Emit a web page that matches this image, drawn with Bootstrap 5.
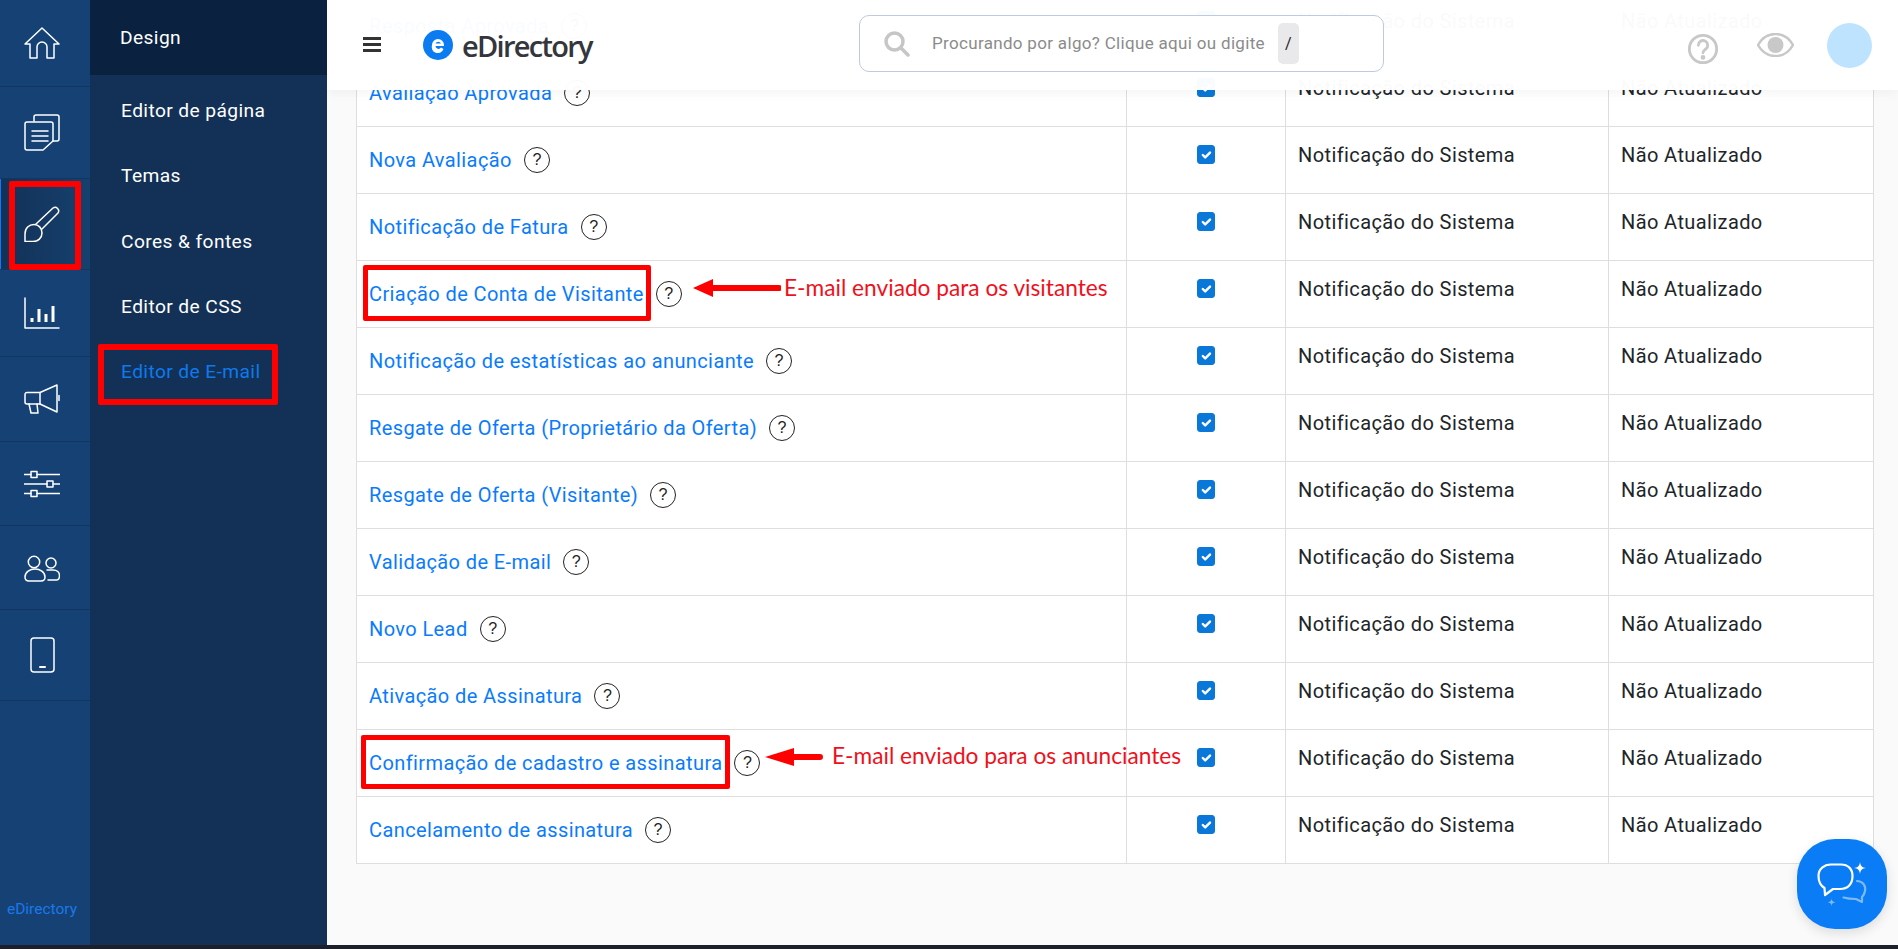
<!DOCTYPE html>
<html lang="pt-BR">

<head>
    <meta charset="UTF-8">
    <meta name="viewport" content="width=device-width, initial-scale=1.0">
    <title>eDirectory - Editor de E-mail</title>
    <link href="https://cdn.jsdelivr.net/npm/bootstrap@5.3.3/dist/css/bootstrap.min.css" rel="stylesheet">
    <style>
        html, body { height: 100%; overflow: hidden; }

        body {
            font-family: Roboto, "Liberation Sans", sans-serif;
            background-color: #1d1f2b;
            color: #212529;
        }

        .app-shell { height: 945px; }

        /* icon rail */
        .rail { width: 90px; background-color: #154175; }
        .rail-item {
            position: relative;
            padding: 27px 6px 27px 0;
            border-bottom: 1px solid #12375f;
            line-height: 0;
            text-align: center;
            color: #fff;
        }
        .rail-item svg { fill: none; stroke: currentColor; stroke-width: 1.5; stroke-linejoin: round; stroke-linecap: round; }
        .rail-item.is-active { background: linear-gradient(90deg, #133156, #15416f); box-shadow: inset 1px 0 0 #0a7bff; }
        .rail-brand { margin-top: auto; padding: 0 6px 24px 0; font-size: 15.5px; color: #1a78ea; text-align: center; }

        /* sub menu */
        .subnav { width: 237px; background-color: #133156; }
        .subnav-title {
            height: 75px;
            padding-left: 30px;
            background-color: #0a2240;
            color: #fff;
            font-size: 19.2px;
            letter-spacing: .4px;
            line-height: 76px;
        }
        .subnav-link {
            display: block;
            position: relative;
            height: 65.25px;
            padding-left: 31px;
            color: #fff;
            font-size: 19.2px;
            letter-spacing: .4px;
            line-height: 65px;
            text-decoration: none;
        }
        .subnav-link.is-current { color: #0f79ec; }
        .subnav-list { padding-top: 3px; }

        /* content */
        .main-area { position: relative; flex: 1; background-color: #fafafa; overflow: hidden; }
        .topbar {
            position: absolute;
            top: 0; left: 0; right: 0;
            height: 90px;
            background-color: rgba(255, 255, 255, .975);
            box-shadow: 0 2px 12px rgba(0, 0, 0, .05);
            z-index: 5;
        }
        .burger { width: 18px; margin-left: 36px; margin-top: -2px; fill: #333; }
        .logo-mark { margin-left: 42px; }
        .logo-word {
            margin-left: 9px;
            font-family: "Open Sans", sans-serif;
            font-size: 29px;
            font-weight: 600;
            letter-spacing: -1.7px;
            color: #33363c;
            line-height: 1;
        }
        .search-box {
            position: absolute;
            left: 532px; top: 15px;
            width: 525px; height: 57px;
            padding-left: 24px;
            border: 1px solid #bccbe0;
            border-radius: 10px;
            background-color: #fff;
        }
        .search-text { margin-left: 22px; font-size: 17px; letter-spacing: .32px; color: #8b8b8b; white-space: nowrap; }
        .slash-key {
            width: 21px; height: 41px;
            margin-left: 13px;
            border-radius: 5px;
            background-color: #e9e9eb;
            color: #222;
            font-size: 16px;
            line-height: 41px;
            text-align: center;
        }
        .top-tools { position: absolute; right: 26px; top: 23px; }
        .tool-eye { margin-left: 38px; margin-top: 10px; }
        .tool-help { margin-top: 10px; }
        .tool-avatar { display: block; width: 45px; height: 45px; margin-left: 33px; border-radius: 50%; background-color: #bde3ff; }

        .mail-table {
            table-layout: fixed;
            width: 1517px;
            margin: -8px 0 0 29px;
            background-color: #fff;
            border-color: #dedede;
            font-size: 20px;
            letter-spacing: .4px;
        }
        .mail-table td { height: 67px; padding: 13px 12px 0; vertical-align: top; color: #212529; border-color: #dedede; }
        .mail-table td.name-cell { padding: 0 12px; vertical-align: middle; }
        .mail-table td.check-cell { padding-top: 18px; text-align: center; }
        .mail-link { color: #0a7bff; text-decoration: none; white-space: nowrap; }
        .help-dot {
            display: inline-block;
            flex: none;
            width: 26px; height: 26px;
            margin-left: 12px;
            border: 1px solid #222;
            border-radius: 50%;
            color: #222;
            font-family: "Liberation Sans", sans-serif;
            font-size: 16px;
            letter-spacing: 0;
            line-height: 24px;
            text-align: center;
        }
        .mail-check.form-check-input {
            width: 18px; height: 19px;
            margin: 0;
            float: none;
            border-radius: 3px;
            background-color: #0a78d8;
            border-color: #0a78d8;
            opacity: 1;
        }

        /* annotations */
        .mark-box { position: absolute; border: 5px solid #ff0000; border-radius: 2px; z-index: 3; }
        .mark-brush { left: 9px; top: 2px; width: 72px; height: 89px; border-width: 6px; }
        .mark-email { left: 8px; top: 5px; width: 180px; height: 61px; border-width: 6px; }
        .mark-visitor { left: 36px; top: 265px; width: 288px; height: 56px; }
        .mark-advertiser { left: 34px; top: 735px; width: 369px; height: 54px; }
        .note-arrow { position: absolute; z-index: 3; fill: #ff0000; }
        .note-text {
            position: absolute;
            z-index: 3;
            font-family: Lato, "Open Sans", sans-serif;
            font-size: 22.7px;
            line-height: 28px;
            color: #f0101c;
            white-space: nowrap;
        }
        .arrow-visitor { left: 366px; top: 279px; }
        .arrow-advertiser { left: 438px; top: 748px; }
        .text-visitor { left: 457px; top: 274px; }
        .text-advertiser { left: 505px; top: 742px; }

        .chat-fab {
            position: absolute;
            right: 11px; bottom: 16px;
            width: 90px; height: 90px;
            border-radius: 38px;
            background-color: #0a7cf5;
            box-shadow: 0 4px 12px rgba(0, 0, 0, .12);
            z-index: 6;
        }
    </style>
</head>

<body>
    <div class="app-shell d-flex">
        <nav class="rail d-flex flex-column">
            <div class="rail-item">
                <svg width="36" height="32" viewBox="0 0 36 32"><path d="M1 17 18 1l17 16h-5v14h-7V20a5 5 0 0 0-10 0v11H6V17Z" /></svg>
            </div>
            <div class="rail-item">
                <svg width="36" height="37" viewBox="0 0 36 37"><path d="M10 7V3a2 2 0 0 1 2-2h21a2 2 0 0 1 2 2v22a2 2 0 0 1-2 2h-4" /><path d="M3 8h24a2 2 0 0 1 2 2v17L19 36H3a2 2 0 0 1-2-2V10a2 2 0 0 1 2-2Z" /><path d="M8 17h16M8 22h16M8 27h16" /></svg>
            </div>
            <div class="rail-item is-active">
                <svg width="36" height="36" viewBox="0 0 36 36"><path d="M12 18 29 2a3.600 3.600 0 0 1 5 5L18 23" /><path d="M1 35.500V28c0-6 4-9.500 9-9.500 4.500 0 8 3.500 8 8.500s-4 8.500-9 8.500Z" /></svg>
                <span class="mark-box mark-brush"></span>
            </div>
            <div class="rail-item">
                <svg width="36" height="32" viewBox="0 0 36 32"><path d="M1 1v30h34" /><path d="M8 21v4M15 12v13M22 17v8M29 9v16" stroke-width="3" stroke-linecap="butt" /></svg>
            </div>
            <div class="rail-item">
                <svg width="36" height="30" viewBox="0 0 36 30"><path d="M3 8.500h13L33 1v27l-17-8H3a2 2 0 0 1-2-2v-7.500a2 2 0 0 1 2-2Z" /><path d="M16 8.500V20M5 20l2 9h7l-1-9M35 11.500v5" /></svg>
            </div>
            <div class="rail-item">
                <svg width="36" height="29" viewBox="0 0 36 29"><path d="M0 5.500h7M13 5.500h23M0 15h23M29 15h7M0 24.500h7M13 24.500h23" /><rect x="7" y="2.500" width="6" height="6" /><rect x="23" y="12" width="6" height="6" /><rect x="7" y="21.500" width="6" height="6" /></svg>
            </div>
            <div class="rail-item">
                <svg width="36" height="29" viewBox="0 0 36 29"><circle cx="10" cy="9" r="5.700" /><circle cx="27" cy="10" r="5" /><path d="M5 28h12c3 0 4-2 4-4 0-5-5-8-10-8S1 19 1 24c0 3 2 4 4 4Z" /><path d="M23 17h6c4 0 6.500 2.500 6.500 5.500 0 3-1 4.500-3 4.500H24" /></svg>
            </div>
            <div class="rail-item">
                <svg width="25" height="36" viewBox="0 0 25 36"><rect x="1" y="1" width="23" height="34" rx="3" /><path d="M10 30h5" stroke-width="2" /></svg>
            </div>
            <div class="rail-brand">eDirectory</div>
        </nav>

        <aside class="subnav">
            <div class="subnav-title">Design</div>
            <div class="subnav-list">
                <a class="subnav-link" href="#">Editor de página</a>
                <a class="subnav-link" href="#">Temas</a>
                <a class="subnav-link" href="#">Cores &amp; fontes</a>
                <a class="subnav-link" href="#">Editor de CSS</a>
                <a class="subnav-link is-current" href="#">Editor de E-mail<span class="mark-box mark-email"></span></a>
            </div>
        </aside>

        <main class="main-area">
            <header class="topbar d-flex align-items-center">
                <svg class="burger" viewBox="0 0 18 15" height="15"><rect width="18" height="3" /><rect y="6" width="18" height="3" /><rect y="12" width="18" height="3" /></svg>
                <svg class="logo-mark" width="30" height="30" viewBox="0 0 30 30"><circle cx="15" cy="15" r="15" fill="#0a7bf0" /><path d="M9 15a6 6 0 1 1 12 0v1H12.500a3 3 0 0 0 5.500 1.500l2.500 1.500A6 6 0 0 1 9 15Zm3.500-1.500H18a3 3 0 0 0-5.500 0Z" fill="#fff" /></svg>
                <span class="logo-word">eDirectory</span>

                <div class="search-box d-flex align-items-center">
                    <svg width="26" height="26" viewBox="0 0 26 26" fill="none" stroke="#c6c6c6" stroke-width="3.500"><circle cx="10.500" cy="10.500" r="8.500" /><path d="m17 17 7 7" stroke-linecap="round" /></svg>
                    <span class="search-text">Procurando por algo? Clique aqui ou digite</span>
                    <span class="slash-key">/</span>
                </div>

                <div class="top-tools d-flex align-items-start">
                    <svg class="tool-help" width="32" height="32" viewBox="0 0 34 34" fill="none" stroke="#c8c8c8" stroke-width="3"><circle cx="17" cy="17" r="14.500" /><path d="M12 13a5 5 0 1 1 8 4c-2 1.500-3 2-3 4" stroke-linecap="round" /><circle cx="17" cy="26" r="1" fill="#c8c8c8" /></svg>
                    <svg class="tool-eye" width="37" height="24" viewBox="0 0 37 24"><path d="M1 12C5 5 11 1 18.500 1S32 5 36 12c-4 7-10 11-17.500 11S5 19 1 12Z" fill="none" stroke="#c8c8c8" stroke-width="2.500" /><circle cx="18.500" cy="12" r="8" fill="#c8c8c8" /></svg>
                    <span class="tool-avatar"></span>
                </div>
            </header>

            <table class="table table-bordered mail-table mb-0">
                <colgroup>
                    <col style="width:770px">
                    <col style="width:159px">
                    <col style="width:323px">
                    <col style="width:265px">
                </colgroup>
                <tbody id="rows"></tbody>
            </table>

            <span class="mark-box mark-visitor"></span>
            <svg class="note-arrow arrow-visitor" width="88" height="18" viewBox="0 0 88 18"><path d="M0 9 20 0v6h66a3 3 0 0 1 0 6H20v6Z" /></svg>
            <span class="note-text text-visitor">E-mail enviado para os visitantes</span>

            <span class="mark-box mark-advertiser"></span>
            <svg class="note-arrow arrow-advertiser" width="58" height="18" viewBox="0 0 58 18"><path d="M0 9 29 0v6h26a3 3 0 0 1 0 6H29v6Z" /></svg>
            <span class="note-text text-advertiser">E-mail enviado para os anunciantes</span>

            <div class="chat-fab d-flex align-items-center justify-content-center">
                <svg width="50" height="48" viewBox="0 0 50 48" fill="none" stroke-linejoin="round" stroke-linecap="round">
                    <path d="M40 21c6 0 9 5 8 10-.5 3-2 5-3 6v5l-6-3c-5 0-9-.5-12.500-1.500" stroke="#7fbaf8" stroke-width="2.200" />
                    <path d="M14 4.500h10c7 0 11.500 4.500 11.500 11.500 0 8-4.500 13-12.500 13h-7l-8 6-.5-7c-4-2.500-6-7-6-12 0-7 5.500-11.500 12.500-11.500Z" stroke="#fff" stroke-width="2.200" />
                    <path d="M43 2c.5 4 2 5.500 6 6-4 .5-5.500 2-6 6-.5-4-2-5.500-6-6 4-.5 5.500-2 6-6Z" fill="#fff" />
                    <path d="M14.600 38.300c.3 2.700 1 3.500 4 4-3 .5-3.700 1.300-4 4-.3-2.700-1-3.500-4-4 3-.5 3.700-1.300 4-4Z" fill="#7fbaf8" />
                </svg>
            </div>
        </main>
    </div>

    <script>
        const names = [
            'Resposta Aprovada', 'Avaliação Aprovada', 'Nova Avaliação', 'Notificação de Fatura',
            'Criação de Conta de Visitante', 'Notificação de estatísticas ao anunciante',
            'Resgate de Oferta (Proprietário da Oferta)', 'Resgate de Oferta (Visitante)',
            'Validação de E-mail', 'Novo Lead', 'Ativação de Assinatura',
            'Confirmação de cadastro e assinatura', 'Cancelamento de assinatura'
        ];

        document.getElementById('rows').innerHTML = names.map(name => `
            <tr>
                <td class="name-cell"><div class="d-flex align-items-center"><a class="mail-link" href="#">${name}</a><span class="help-dot">?</span></div></td>
                <td class="check-cell"><input class="form-check-input mail-check" type="checkbox" checked></td>
                <td>Notificação do Sistema</td>
                <td>Não Atualizado</td>
            </tr>`).join('');
    </script>
    <script src="https://cdn.jsdelivr.net/npm/bootstrap@5.3.3/dist/js/bootstrap.bundle.min.js"></script>
</body>

</html>
